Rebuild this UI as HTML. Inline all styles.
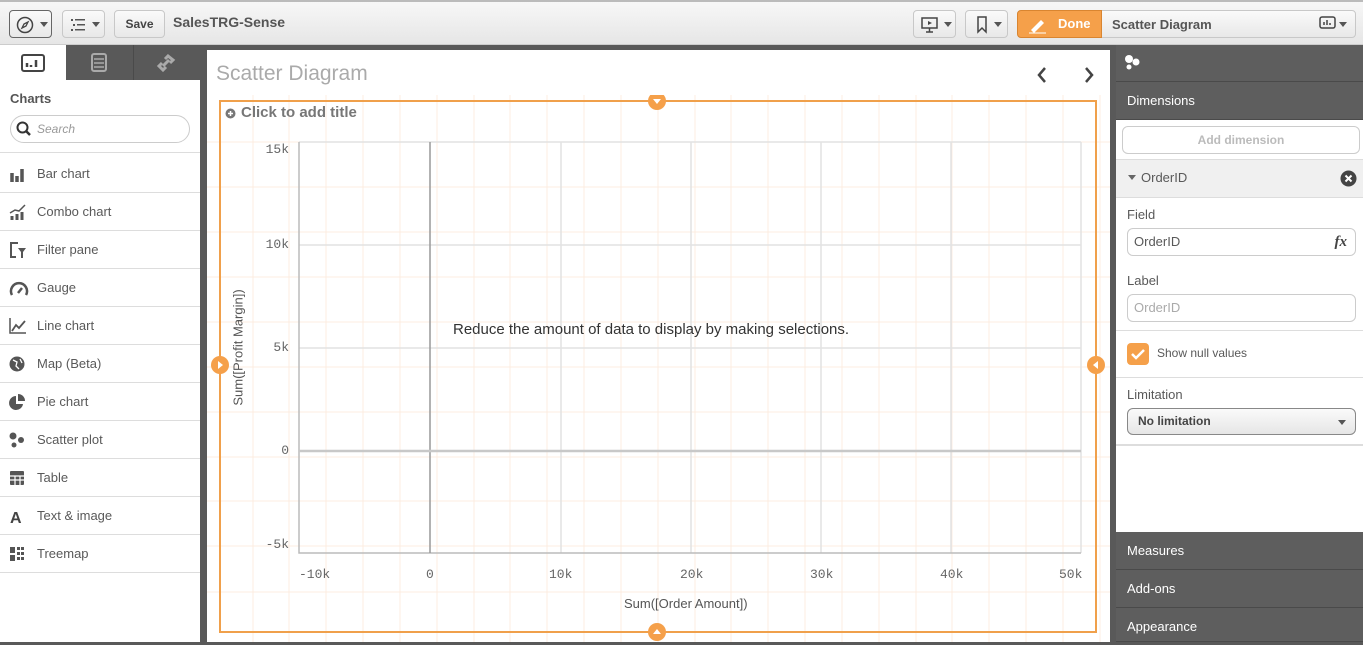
<!DOCTYPE html>
<html><head><meta charset="utf-8"><style>
*{box-sizing:border-box;margin:0;padding:0}
body{width:1363px;height:642px;overflow:hidden;font-family:"Liberation Sans",sans-serif;background:#595959;position:relative;color:#595959}
.abs{position:absolute}
.top{left:0;top:0;width:1363px;height:45px;background:linear-gradient(#f7f7f7,#e6e6e6);border-top:2px solid #bbb;border-bottom:1px solid #ccc}
.btn{position:absolute;top:8px;height:28px;border:1px solid #c8c8c8;border-radius:4px;background:linear-gradient(#fafafa,#e8e8e8)}
.caret{position:absolute;width:0;height:0;border-left:4px solid transparent;border-right:4px solid transparent;border-top:5px solid #555}
.left{left:0;top:45px;width:200px;height:597px;background:#fff}
.item{position:absolute;left:0;width:200px;height:38px;border-bottom:1px solid #ddd;font-size:13px;color:#595959;line-height:38px;padding-left:37px}
.item svg{position:absolute;left:9px;top:11px}
.rp{left:1116px;top:45px;width:247px;height:597px;background:#fff}
.band{position:absolute;left:0;width:247px;background:#5e5e5e;color:#fff;font-size:13px;padding-left:11px;border-bottom:1px solid #4a4a4a}
.inp{position:absolute;left:11px;width:229px;height:28px;border:1px solid #ccc;border-radius:6px;font-size:13px;padding-left:6px;line-height:26px}
.lbl{position:absolute;left:11px;font-size:13px;color:#595959}
.yl{position:absolute;font-family:"Liberation Mono",monospace;font-size:13px;color:#666;text-align:right;width:40px}
.xl{position:absolute;font-family:"Liberation Mono",monospace;font-size:13px;color:#666;top:567px}
</style></head><body>
<div class="abs top">
 <div class="btn" style="left:9px;width:43px;border-color:#666;border-width:1.5px"><svg class="abs" style="left:6px;top:5px" width="18" height="18"><circle cx="9" cy="9" r="7.5" fill="none" stroke="#444" stroke-width="1.5"/><path d="M6 12 L8 8 L12 6 L10 10Z" fill="none" stroke="#444" stroke-width="1.3"/></svg><div class="caret" style="left:30px;top:11px"></div></div>
 <div class="btn" style="left:62px;width:43px"><svg class="abs" style="left:8px;top:6px" width="18" height="16"><g fill="#555"><rect x="0" y="2" width="2" height="2"/><rect x="4" y="2" width="10" height="1.5"/><rect x="2" y="7" width="2" height="2"/><rect x="6" y="7" width="8" height="1.5"/><rect x="0" y="12" width="2" height="2"/><rect x="4" y="12" width="10" height="1.5"/></g></svg><div class="caret" style="left:29px;top:11px"></div></div>
 <div class="btn" style="left:114px;width:51px;font-weight:bold;font-size:12px;color:#444;text-align:center;line-height:26px">Save</div>
 <div class="abs" style="left:173px;top:12px;font-size:14px;font-weight:bold;color:#555">SalesTRG-Sense</div>
 <div class="btn" style="left:913px;width:43px"><svg class="abs" style="left:7px;top:5px" width="18" height="18"><rect x="1" y="2" width="15" height="10" fill="none" stroke="#444" stroke-width="1.5"/><path d="M7 5 L11 7 L7 9Z" fill="#444"/><path d="M8.5 12 V16 M5 16 H12" stroke="#444" stroke-width="1.5"/></svg><div class="caret" style="left:30px;top:11px"></div></div>
 <div class="btn" style="left:965px;width:43px"><svg class="abs" style="left:10px;top:5px" width="12" height="18"><path d="M2 1 H10 V16 L6 12 L2 16Z" fill="none" stroke="#444" stroke-width="1.5"/></svg><div class="caret" style="left:28px;top:11px"></div></div>
 <div class="btn" style="left:1017px;width:339px;padding:0"></div>
 <div class="abs" style="left:1017px;top:8px;width:85px;height:28px;background:#f5a04a;border:1px solid #d98530;border-radius:4px 0 0 4px;color:#fff;font-weight:bold;font-size:13px;line-height:26px;padding-left:40px">Done<svg class="abs" style="left:10px;top:5px" width="22" height="18"><path d="M3 14 L13 4 L16 7 L6 17Z" fill="#fff"/><path d="M1 17 H18" stroke="#fff" stroke-width="1"/></svg></div>
 <div class="abs" style="left:1112px;top:15px;font-size:13px;font-weight:bold;color:#555">Scatter Diagram</div>
 <svg class="abs" style="left:1319px;top:14px" width="18" height="14"><rect x="1" y="1" width="15" height="11" rx="2" fill="none" stroke="#444" stroke-width="1.5"/><path d="M5 9V6 M8 9V4 M11 9V7" stroke="#444" stroke-width="1.5"/></svg><div class="caret" style="left:1339px;top:20px"></div>
</div>

<div class="abs left">
 <div class="abs" style="left:66px;top:0;width:134px;height:35px;background:#595959"></div>
 <div class="abs" style="left:133px;top:0;width:1px;height:35px;background:#4a4a4a"></div>
 <svg class="abs" style="left:21px;top:9px" width="24" height="18"><rect x="1" y="1" width="22" height="16" rx="2" fill="none" stroke="#444" stroke-width="2"/><path d="M6 13V9 M10 13V11 M15 13V6" stroke="#444" stroke-width="2.5"/></svg>
 <svg class="abs" style="left:91px;top:8px" width="16" height="20"><rect x="1" y="1" width="14" height="17" rx="2" fill="none" stroke="#aaa" stroke-width="2"/><path d="M3 6H13 M3 10H13 M3 14H13" stroke="#aaa" stroke-width="1.5"/></svg>
 <svg class="abs" style="left:156px;top:9px" width="20" height="18"><g fill="none" stroke="#aaa" stroke-width="3"><path d="M9 5 L12 2 L17 6 L14 9"/><path d="M10 13 L7 16 L3 12 L6 9"/><path d="M7 12 L13 6"/></g></svg>
 <div class="abs" style="left:10px;top:46px;font-size:13px;font-weight:bold;color:#555">Charts</div>
 <div class="abs" style="left:10px;top:70px;width:180px;height:28px;border:1px solid #ccc;border-radius:14px"></div>
 <svg class="abs" style="left:16px;top:76px" width="16" height="16"><circle cx="6.5" cy="6.5" r="5" fill="none" stroke="#333" stroke-width="2"/><path d="M10 10 L14 14" stroke="#333" stroke-width="2.5"/></svg>
 <div class="abs" style="left:37px;top:77px;font-size:12px;font-style:italic;color:#999">Search</div>
 <div class="abs" style="left:0;top:107px;width:200px;height:1px;background:#ddd"></div>
 <div class="item" style="top:110px">Bar chart<svg width="18" height="16"><path d="M3 16V7 M8 16V10 M13 16V3" stroke="#555" stroke-width="3.5"/></svg></div>
 <div class="item" style="top:148px">Combo chart<svg width="18" height="16"><path d="M3 16V12 M8 16V10 M13 16V8" stroke="#555" stroke-width="3"/><path d="M1 9 L6 6 L10 7 L16 1" fill="none" stroke="#555" stroke-width="1.5"/></svg></div>
 <div class="item" style="top:186px">Filter pane<svg width="18" height="17"><path d="M9 1H2V15H7" fill="none" stroke="#555" stroke-width="2"/><path d="M9 6H17L14 10V16H12V10Z" fill="#555"/></svg></div>
 <div class="item" style="top:224px">Gauge<svg width="20" height="16"><path d="M3 15 A8 8 0 1 1 17 15" fill="none" stroke="#555" stroke-width="2.5"/><path d="M9 13 L13 8" stroke="#555" stroke-width="2.5"/></svg></div>
 <div class="item" style="top:262px">Line chart<svg width="18" height="16"><path d="M1 0V15H17" fill="none" stroke="#555" stroke-width="1.5"/><path d="M3 13 L7 7 L10 10 L16 3" fill="none" stroke="#555" stroke-width="1.8"/></svg></div>
 <div class="item" style="top:300px">Map (Beta)<svg width="18" height="17"><circle cx="8" cy="8" r="7.5" fill="#555"/><path d="M4 4 L8 6 L7 10 L10 13 M11 3 L13 7" stroke="#fff" stroke-width="1.3" fill="none"/></svg></div>
 <div class="item" style="top:338px">Pie chart<svg width="18" height="17"><path d="M7 2 A7 7 0 1 0 14 10 H7Z" fill="#555"/><path d="M9 0 A7 7 0 0 1 16 7 H9Z" fill="#555"/></svg></div>
 <div class="item" style="top:376px">Scatter plot<svg width="18" height="17"><circle cx="4" cy="4" r="3.5" fill="#555"/><circle cx="12" cy="8" r="3" fill="#555"/><circle cx="5" cy="13" r="2.5" fill="#555"/></svg></div>
 <div class="item" style="top:414px">Table<svg width="18" height="17"><rect x="1" y="1" width="14" height="14" rx="1" fill="#555"/><path d="M1 6H15 M1 10H15 M6 6V15 M11 6V15" stroke="#fff" stroke-width="1.2"/></svg></div>
 <div class="item" style="top:452px">Text &amp; image<svg width="18" height="17"><text x="1" y="15" font-family="Liberation Sans" font-weight="bold" font-size="16" fill="#444">A</text></svg></div>
 <div class="item" style="top:490px">Treemap<svg width="18" height="17"><g fill="#555"><rect x="1" y="1" width="5" height="6"/><rect x="1" y="9" width="5" height="6"/><rect x="8" y="1" width="3" height="3"/><rect x="12" y="1" width="3" height="3"/><rect x="8" y="6" width="3" height="3"/><rect x="12" y="6" width="3" height="3"/><rect x="8" y="11" width="3" height="3"/><rect x="12" y="11" width="3" height="3"/></g></svg></div>
</div>

<div class="abs" style="left:207px;top:50px;width:903px;height:592px;background:#fff"></div>
<div class="abs" style="left:216px;top:62px;font-size:21px;color:#aaa">Scatter Diagram</div>
<svg class="abs" style="left:1034px;top:66px" width="70" height="18"><path d="M11 2 L5 9 L11 16" fill="none" stroke="#444" stroke-width="2.5"/><path d="M52 2 L58 9 L52 16" fill="none" stroke="#444" stroke-width="2.5"/></svg>

<svg class="abs" style="left:207px;top:95px" width="903" height="547">
 <g stroke="#fcece0" stroke-width="1">
  <path d="M46 0V547 M82 0V547 M119 0V547 M156 0V547 M193 0V547 M230 0V547 M267 0V547 M303 0V547 M340 0V547 M377 0V547 M414 0V547 M451 0V547 M488 0V547 M524 0V547 M561 0V547 M598 0V547 M635 0V547 M672 0V547 M709 0V547 M745 0V547 M782 0V547 M819 0V547 M856 0V547 M893 0V547"/>
  <path d="M0 47H903 M0 92H903 M0 137H903 M0 182H903 M0 227H903 M0 272H903 M0 317H903 M0 362H903 M0 406H903 M0 451H903 M0 497H903"/>
 </g>
 <rect x="13" y="6" width="876" height="531" fill="none" stroke="#f0a04b" stroke-width="2"/>
 <g stroke="#e2e2e2" stroke-width="1.5"><path d="M92 47H874 M92 150H874 M92 253H874 M354 47V458 M484 47V458 M614 47V458 M744 47V458 M874 47V458"/></g>
 <path d="M92 47V458 H874" fill="none" stroke="#bbb" stroke-width="1.5"/>
 <path d="M223 47V458" stroke="#999" stroke-width="1.5"/>
 <path d="M92 356H874" stroke="#c8c8c8" stroke-width="2.5"/>
 <g fill="#f5a04a"><circle cx="450" cy="6" r="9"/><circle cx="450" cy="537" r="9"/><circle cx="13" cy="270" r="9"/><circle cx="889" cy="270" r="9"/></g>
 <g fill="#fff"><path d="M446 4H454L450 9Z"/><path d="M446 539H454L450 534Z"/><path d="M11 266V274L16 270Z"/><path d="M891 266V274L886 270Z"/></g>
</svg>
<svg class="abs" style="left:225px;top:108px" width="12" height="12"><circle cx="5.5" cy="5.5" r="5" fill="#777"/><path d="M3 5.5H8 M5.5 3V8" stroke="#fff" stroke-width="1.5"/></svg>
<div class="abs" style="left:241px;top:104px;font-size:15px;font-weight:bold;color:#777">Click to add title</div>
<div class="yl" style="left:249px;top:142px">15k</div>
<div class="yl" style="left:249px;top:237px">10k</div>
<div class="yl" style="left:249px;top:340px">5k</div>
<div class="yl" style="left:249px;top:443px">0</div>
<div class="yl" style="left:249px;top:537px">-5k</div>
<div class="xl" style="left:299px">-10k</div>
<div class="xl" style="left:426px">0</div>
<div class="xl" style="left:549px">10k</div>
<div class="xl" style="left:680px">20k</div>
<div class="xl" style="left:810px">30k</div>
<div class="xl" style="left:940px">40k</div>
<div class="xl" style="left:1059px">50k</div>
<div class="abs" style="left:624px;top:596px;font-size:13px;color:#555">Sum([Order Amount])</div>
<div class="abs" style="left:173px;top:340px;width:130px;font-size:13px;color:#555;transform:rotate(-90deg);text-align:center;white-space:nowrap">Sum([Profit Margin])</div>
<div class="abs" style="left:453px;top:321px;font-size:15px;color:#333">Reduce the amount of data to display by making selections.</div>

<div class="abs rp">
 <div class="band" style="top:0;height:37px"><svg class="abs" style="left:8px;top:9px" width="18" height="18"><circle cx="5" cy="5" r="4" fill="#fff"/><circle cx="12" cy="8" r="3.5" fill="#fff"/><circle cx="5" cy="13" r="2.5" fill="#fff"/></svg></div>
 <div class="band" style="top:37px;height:38px;line-height:38px">Dimensions</div>
 <div class="abs" style="left:6px;top:81px;width:238px;height:28px;border:1px solid #ccc;border-radius:6px;text-align:center;line-height:26px;font-size:12px;font-weight:bold;color:#bbb">Add dimension</div>
 <div class="abs" style="left:0;top:114px;width:247px;height:39px;background:#f0f0f0;border-top:1px solid #ddd;border-bottom:1px solid #ddd"></div>
 <div class="caret" style="left:12px;top:130px;border-top-color:#666"></div>
 <div class="abs" style="left:25px;top:125px;font-size:13px;color:#595959">OrderID</div>
 <svg class="abs" style="left:224px;top:125px" width="17" height="17"><circle cx="8.5" cy="8.5" r="8" fill="#444"/><path d="M5.5 5.5L11.5 11.5M11.5 5.5L5.5 11.5" stroke="#fff" stroke-width="2"/></svg>
 <div class="lbl" style="top:162px">Field</div>
 <div class="inp" style="top:183px;color:#595959">OrderID<span style="position:absolute;right:8px;top:0;font-family:'Liberation Serif',serif;font-style:italic;font-weight:bold;font-size:15px;color:#444">fx</span></div>
 <div class="lbl" style="top:228px">Label</div>
 <div class="inp" style="top:249px;color:#aaa">OrderID</div>
 <div class="abs" style="left:0;top:285px;width:247px;height:1px;background:#ddd"></div>
 <div class="abs" style="left:11px;top:298px;width:22px;height:22px;background:#f5a04a;border-radius:4px"><svg width="22" height="22"><path d="M5 11 L9 15 L17 7" fill="none" stroke="#fff" stroke-width="2.5"/></svg></div>
 <div class="abs" style="left:41px;top:301px;font-size:12px;color:#595959">Show null values</div>
 <div class="abs" style="left:0;top:332px;width:247px;height:1px;background:#ddd"></div>
 <div class="lbl" style="top:342px">Limitation</div>
 <div class="abs" style="left:11px;top:363px;width:229px;height:27px;border:1px solid #888;border-radius:6px;background:linear-gradient(#fafafa,#e6e6e6);font-size:12px;font-weight:bold;color:#444;line-height:25px;padding-left:10px">No limitation</div>
 <div class="caret" style="left:222px;top:375px"></div>
 <div class="abs" style="left:0;top:399px;width:247px;height:2px;background:#ddd"></div>
 <div class="band" style="top:487px;height:38px;line-height:37px">Measures</div>
 <div class="band" style="top:525px;height:38px;line-height:37px">Add-ons</div>
 <div class="band" style="top:563px;height:34px;line-height:37px">Appearance</div>
</div>
</body></html>
